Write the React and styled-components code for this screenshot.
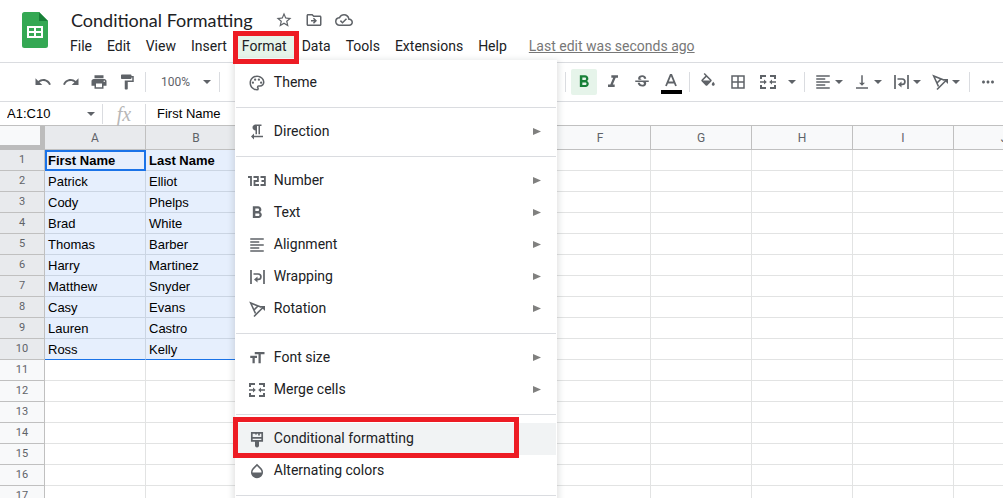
import React from "react";
import styled, { createGlobalStyle, css } from "styled-components";
import {
    MdUndo,
    MdRedo,
    MdPrint,
    MdFormatPaint,
    MdFormatBold,
    MdFormatItalic,
    MdStrikethroughS,
    MdBorderAll,
    MdFormatAlignLeft,
    MdVerticalAlignBottom,
    MdMoreHoriz,
    MdStarBorder,
    MdOutlineDriveFileMove,
    MdOutlineCloudDone,
    MdOutlinePalette,
    MdFormatTextdirectionRToL,
    MdFormatSize,
    MdOpacity,
} from "react-icons/md";

const GlobalStyle = createGlobalStyle`
    * {
        box-sizing: border-box;
    }
    body {
        margin: 0;
        background: #fff;
        font-family: Roboto, "Liberation Sans", sans-serif;
    }
    button {
        border: 0;
        padding: 0;
        background: none;
        color: inherit;
        font-family: inherit;
    }
    svg {
        display: block;
        flex-shrink: 0;
    }
`;

const Page = styled.div`
    height: 100vh;
    overflow: hidden;
`;

const Header = styled.header`
    display: flex;
    gap: 15px;
    height: 63px;
    padding: 9px 0 0 22px;
    border-bottom: 1px solid #dadce0;
`;

const Logo = styled.a`
    padding-top: 3px;
`;

const HeaderBody = styled.div`
    display: flex;
    flex-direction: column;
    gap: 3px;
`;

const TitleRow = styled.div`
    display: flex;
    align-items: center;
    height: 22px;
    padding-left: 8px;
    color: #5f6368;
`;

const Title = styled.h1`
    margin: 0 22px 0 0;
    color: #202124;
    font-family: Lato, "Open Sans", sans-serif;
    font-size: 18px;
    font-weight: 400;
    line-height: 22px;
    white-space: nowrap;
`;

const TitleButton = styled.button`
    width: 18px;
    margin-right: 12px;
    font-size: 18px;
`;

const MenuBar = styled.nav`
    display: flex;
    align-items: center;
    gap: 1px;
`;

const MenuHolder = styled.div`
    position: relative;
`;

const redBox = css`
    &::after {
        content: "";
        position: absolute;
        z-index: 3;
        border: 5px solid #ed1c24;
        pointer-events: none;
    }
`;

const MenuButton = styled.button`
    height: 24px;
    padding: 0 7px;
    background: ${(props) => (props.$open ? "#e6f4ea" : "none")};
    color: #202124;
    font-size: 14px;
    line-height: 22px;
    ${(props) =>
        props.$open &&
        css`
            ${redBox}
            &::after {
                inset: -3px -5px -6px -2px;
            }
        `}
`;

const LastEdit = styled.a`
    margin-left: 14px;
    color: #777;
    font-size: 14px;
    line-height: 22px;
    white-space: nowrap;
`;

const Menu = styled.div`
    position: absolute;
    z-index: 2;
    top: 26px;
    left: 0;
    width: 322px;
    padding: 6px 0;
    border: 1px solid #fff;
    background: #fff;
    box-shadow: 0 2px 6px 2px rgba(60, 64, 67, 0.15);
`;

const MenuItem = styled.button`
    position: relative;
    display: flex;
    align-items: center;
    width: 100%;
    height: 32px;
    padding: 0 15px 0 12px;
    background: ${(props) => (props.$marked ? "#f1f3f4" : "none")};
    color: #202124;
    font-size: 14px;
    text-align: left;
    ${(props) =>
        props.$marked &&
        css`
            ${redBox}
            &::after {
                inset: -6px 37px -3px -3px;
            }
        `}
`;

const ItemIcon = styled.span`
    display: flex;
    justify-content: center;
    width: 18px;
    margin-right: 8px;
    color: #5f6368;
    font-size: 18px;
`;

const ItemText = styled.span`
    flex: 1;
    line-height: 30px;
    padding-bottom: 2px;
`;

const Divider = styled.hr`
    height: 1px;
    margin: 8px 0;
    border: 0;
    background: #dadce0;
`;

const Toolbar = styled.div`
    display: flex;
    justify-content: space-between;
    height: 39px;
    padding: 0 2px 0 30px;
    border-bottom: 1px solid #dadce0;
    color: #5f6368;
`;

const ToolSection = styled.div`
    display: flex;
    align-items: center;
`;

const ToolGroup = styled.div`
    display: flex;
    align-items: center;
    gap: ${(props) => props.$gap || 2}px;
`;

const ToolButton = styled.button`
    display: flex;
    align-items: center;
    justify-content: center;
    width: 26px;
    height: 26px;
    border-radius: 2px;
    background: ${(props) => (props.$active ? "#e6f4ea" : "none")};
    color: ${(props) => (props.$active ? "#188038" : "inherit")};
    font-size: 18px;
`;

const ArrowButton = styled(ToolButton)`
    width: 14px;
`;

const SplitButton = styled(ToolButton)`
    width: 37px;
    gap: 3px;
`;

const ZoomButton = styled(ToolButton)`
    justify-content: space-between;
    width: 63px;
    padding: 0 3px 0 10px;
    font-size: 12px;
`;

const Separator = styled.span`
    width: 1px;
    height: 20px;
    margin: 0 5px;
    background: #dadce0;
`;

const FormulaBar = styled.div`
    display: flex;
    align-items: center;
    height: 24px;
    border-bottom: 1px solid #c0c0c0;
    color: #5f6368;
`;

const NameBox = styled.div`
    display: flex;
    align-items: center;
    width: 103px;
    padding: 0 7px;
    border-right: 1px solid #dadce0;
`;

const BarInput = styled.input`
    flex: 1;
    min-width: 0;
    height: 20px;
    padding: 0;
    border: 0;
    outline: 0;
    background: none;
    color: #000;
    font-family: "Liberation Sans", sans-serif;
    font-size: 13px;
`;

const Fx = styled.label`
    width: 43px;
    margin-right: 11px;
    border-right: 1px solid #dadce0;
    color: #b7b7b7;
    font-family: "Liberation Serif", serif;
    font-size: 20px;
    font-style: italic;
    line-height: 20px;
    text-align: center;
`;

const Sheet = styled.table`
    width: max-content;
    border-spacing: 0;
    table-layout: fixed;
`;

const Corner = styled.td`
    width: 45px;
    height: 24px;
    padding: 0;
    border: solid #bcbcbc;
    border-width: 0 5px 5px 0;
    background: #f8f9fa;
`;

const HeadCell = styled.th`
    height: ${(props) => (props.$column ? 24 : 21)}px;
    width: ${(props) => (props.$column ? 101 : 45)}px;
    padding: 0;
    border: solid #c0c0c0;
    border-width: 0 1px 1px 0;
    background: ${(props) => (props.$selected ? "#e8eaed" : "#f8f9fa")};
    color: #5f6368;
    font-size: ${(props) => (props.$column ? 12 : 11)}px;
    font-weight: 400;
    line-height: 18px;
`;

const Cell = styled.td`
    height: 21px;
    padding: 2px 3px 0;
    border: solid #e2e3e3;
    border-width: 0 1px 1px 0;
    color: #000;
    font-family: "Liberation Sans", sans-serif;
    font-size: 13px;
    font-weight: ${(props) => (props.$bold ? 700 : 400)};
    line-height: 18px;
    ${(props) =>
        props.$selected &&
        css`
            background: #e6effd;
            border-color: #cbd5e3;
        `}
    ${(props) =>
        props.$last &&
        css`
            border-bottom-color: #1a73e8;
        `}
    ${(props) =>
        props.$current &&
        css`
            outline: 2px solid #1a73e8;
            outline-offset: -2px;
        `}
`;

const SheetsLogo = () => (
    <svg width="26" height="36" viewBox="0 0 26 36">
        <path fill="#34a853" d="M2.500 0H17l9 9v24.500a2.500 2.500 0 0 1-2.500 2.500h-21A2.500 2.500 0 0 1 0 33.500v-31A2.500 2.500 0 0 1 2.500 0z" />
        <path fill="#188038" d="M17 0l9 9h-9z" />
        <path fill="#fff" fillRule="evenodd" d="M5 14h16v12H5zM7 16v3h5v-3zM14 16v3h5v-3zM7 21v3h5v-3zM14 21v3h5v-3z" />
    </svg>
);

const DownArrow = () => (
    <svg width="8" height="4" viewBox="0 0 8 4">
        <path fill="currentColor" d="M0 0h8L4 4z" />
    </svg>
);

const RightArrow = () => (
    <svg width="8" height="9" viewBox="0 0 8 9">
        <path fill="#80807f" d="M0 0l8 3.500L0 7z" />
    </svg>
);

const MergeIcon = () => (
    <svg width="18" height="18" viewBox="0 0 18 18" fill="none" stroke="currentColor" strokeWidth="2">
        <path d="M2 6V3h5M11 3h5v3M2 12v3h5M11 15h5v-3" />
        <path strokeWidth="1.600" d="M1 9h5M17 9h-5" />
        <path fill="currentColor" stroke="none" d="M5 6.500L7.800 9 5 11.500zM13 6.500L10.200 9l2.800 2.500z" />
    </svg>
);

const WrapIcon = () => (
    <svg width="18" height="18" viewBox="0 0 18 18" fill="none" stroke="currentColor" strokeWidth="1.700">
        <path d="M3 2v14M16 2v14" />
        <path d="M5.500 6h4.700a2.700 2.700 0 0 1 0 5.400H9" />
        <path fill="currentColor" stroke="none" d="M9.500 8.500v6L6 11.500z" />
    </svg>
);

const RotateIcon = () => (
    <svg width="18" height="18" viewBox="0 0 18 18" fill="none" stroke="currentColor" strokeWidth="1.600">
        <path d="M7.500 13.500L2.700 3l10.800 4.200M10 6L6 10" />
        <path d="M6 16.500L15 7.500" />
        <path fill="currentColor" stroke="none" d="M12 6h5v5z" />
    </svg>
);

const FillIcon = () => (
    <svg width="18" height="18" viewBox="0 0 24 24" fill="currentColor">
        <path d="M16.560 8.940L7.620 0 6.210 1.410l2.380 2.380-5.150 5.150c-.59.59-.59 1.540 0 2.120l5.500 5.500c.29.29.68.44 1.060.44s.77-.15 1.060-.44l5.500-5.500c.59-.58.59-1.530 0-2.120zM5.210 10L10 5.210 14.790 10H5.210z" />
        <path d="M19 11.500s-2 2.170-2 3.500c0 1.100.9 2 2 2s2-.9 2-2c0-1.330-2-3.500-2-3.500z" />
    </svg>
);

const NumberIcon = () => (
    <svg width="18" height="10" viewBox="0 0 18 10" fill="none" stroke="currentColor" strokeWidth="1.800">
        <path d="M0 1h3v9M5.500 1h4.400v4H6.500v4H11M12.500 1h4.400v8h-4.400M13.500 5h3" />
    </svg>
);

const BrushIcon = () => (
    <svg width="18" height="18" viewBox="0 0 18 18" fill="none" stroke="currentColor" strokeWidth="1.700">
        <path d="M3.800 2.800h10.400v8H3.800zM4 7.800h10M11 3v2.500M8 3v1.500" />
        <path fill="currentColor" stroke="none" d="M7 11h4v4.500a2 2 0 0 1-4 0z" />
    </svg>
);

const TextColorIcon = () => (
    <svg width="21" height="24" viewBox="0 0 21 24">
        <path fill="none" stroke="#5f6368" strokeWidth="1.800" d="M5 16L9.600 5h.8L15 16M6.500 12.500h7" />
        <path fill="#000" d="M0 20h21v4H0z" />
    </svg>
);

const menuSections = [
    [{ label: "Theme", icon: <MdOutlinePalette /> }],
    [{ label: "Direction", icon: <MdFormatTextdirectionRToL />, sub: true }],
    [
        { label: "Number", icon: <NumberIcon />, sub: true },
        { label: "Text", icon: <MdFormatBold size={20} />, sub: true },
        { label: "Alignment", icon: <MdFormatAlignLeft />, sub: true },
        { label: "Wrapping", icon: <WrapIcon />, sub: true },
        { label: "Rotation", icon: <RotateIcon />, sub: true },
    ],
    [
        { label: "Font size", icon: <MdFormatSize />, sub: true },
        { label: "Merge cells", icon: <MergeIcon />, sub: true },
    ],
    [
        { label: "Conditional formatting", icon: <BrushIcon />, marked: true },
        { label: "Alternating colors", icon: <MdOpacity /> },
    ],
];

const columns = ["A", "B", "C", "D", "E", "F", "G", "H", "I", "J"];

const people = [
    ["First Name", "Last Name"],
    ["Patrick", "Elliot"],
    ["Cody", "Phelps"],
    ["Brad", "White"],
    ["Thomas", "Barber"],
    ["Harry", "Martinez"],
    ["Matthew", "Snyder"],
    ["Casy", "Evans"],
    ["Lauren", "Castro"],
    ["Ross", "Kelly"],
];

const rowNumbers = Array.from({ length: 17 }, (_, i) => i + 1);

const FormatMenu = () => (
    <Menu>
        {menuSections.map((section, i) => (
            <React.Fragment key={i}>
                {i > 0 && <Divider />}
                {section.map((item) => (
                    <MenuItem key={item.label} $marked={item.marked}>
                        <ItemIcon>{item.icon}</ItemIcon>
                        <ItemText>{item.label}</ItemText>
                        {item.sub && <RightArrow />}
                    </MenuItem>
                ))}
            </React.Fragment>
        ))}
        <Divider />
    </Menu>
);

const TopBar = () => (
    <Header>
        <Logo href="#" aria-label="Sheets home">
            <SheetsLogo />
        </Logo>
        <HeaderBody>
            <TitleRow>
                <Title>Conditional Formatting</Title>
                <TitleButton aria-label="Star"><MdStarBorder /></TitleButton>
                <TitleButton aria-label="Move"><MdOutlineDriveFileMove /></TitleButton>
                <TitleButton aria-label="Saved"><MdOutlineCloudDone /></TitleButton>
            </TitleRow>
            <MenuBar>
                {["File", "Edit", "View", "Insert", "Format", "Data", "Tools", "Extensions", "Help"].map((name) => (
                    <MenuHolder key={name}>
                        <MenuButton $open={name === "Format"}>{name}</MenuButton>
                        {name === "Format" && <FormatMenu />}
                    </MenuHolder>
                ))}
                <LastEdit href="#">Last edit was seconds ago</LastEdit>
            </MenuBar>
        </HeaderBody>
    </Header>
);

const Tools = () => (
    <Toolbar>
        <ToolSection>
            <ToolGroup>
                <ToolButton aria-label="Undo"><MdUndo /></ToolButton>
                <ToolButton aria-label="Redo"><MdRedo /></ToolButton>
                <ToolButton aria-label="Print"><MdPrint /></ToolButton>
                <ToolButton aria-label="Paint format"><MdFormatPaint /></ToolButton>
            </ToolGroup>
            <Separator />
            <ZoomButton>100% <DownArrow /></ZoomButton>
            <Separator />
        </ToolSection>
        <ToolSection>
            <ArrowButton aria-label="Font size"><DownArrow /></ArrowButton>
            <Separator />
            <ToolGroup $gap={3}>
                <ToolButton $active aria-label="Bold"><MdFormatBold size={20} /></ToolButton>
                <ToolButton aria-label="Italic"><MdFormatItalic size={20} /></ToolButton>
                <ToolButton aria-label="Strikethrough"><MdStrikethroughS /></ToolButton>
                <ToolButton aria-label="Text color"><TextColorIcon /></ToolButton>
            </ToolGroup>
            <Separator />
            <ToolGroup $gap={4}>
                <ToolButton aria-label="Fill color"><FillIcon /></ToolButton>
                <ToolButton aria-label="Borders"><MdBorderAll /></ToolButton>
                <ToolButton aria-label="Merge cells"><MergeIcon /></ToolButton>
                <ArrowButton aria-label="Merge type"><DownArrow /></ArrowButton>
            </ToolGroup>
            <Separator />
            <ToolGroup>
                <SplitButton aria-label="Horizontal align"><MdFormatAlignLeft /><DownArrow /></SplitButton>
                <SplitButton aria-label="Vertical align"><MdVerticalAlignBottom /><DownArrow /></SplitButton>
                <SplitButton aria-label="Text wrapping"><WrapIcon /><DownArrow /></SplitButton>
                <SplitButton aria-label="Text rotation"><RotateIcon /><DownArrow /></SplitButton>
            </ToolGroup>
            <Separator />
            <ToolButton aria-label="More"><MdMoreHoriz /></ToolButton>
        </ToolSection>
    </Toolbar>
);

const Grid = () => (
    <Sheet>
        <thead>
            <tr>
                <Corner />
                {columns.map((name, i) => (
                    <HeadCell key={name} scope="col" $column $selected={i < 3}>{name}</HeadCell>
                ))}
            </tr>
        </thead>
        <tbody>
            {rowNumbers.map((number) => (
                <tr key={number}>
                    <HeadCell scope="row" $selected={number <= 10}>{number}</HeadCell>
                    {columns.map((name, i) => (
                        <Cell
                            key={name}
                            $bold={number === 1}
                            $selected={number <= 10 && i < 3}
                            $last={number === 10 && i < 3}
                            $current={number === 1 && i === 0}
                        >
                            {people[number - 1]?.[i]}
                        </Cell>
                    ))}
                </tr>
            ))}
        </tbody>
    </Sheet>
);

export default class App extends React.Component {
    render() {
        return (
            <Page>
                <GlobalStyle />
                <TopBar />
                <Tools />
                <FormulaBar>
                    <NameBox>
                        <BarInput aria-label="Name box" defaultValue="A1:C10" />
                        <DownArrow />
                    </NameBox>
                    <Fx htmlFor="formula">fx</Fx>
                    <BarInput id="formula" defaultValue="First Name" />
                </FormulaBar>
                <Grid />
            </Page>
        );
    }
}
